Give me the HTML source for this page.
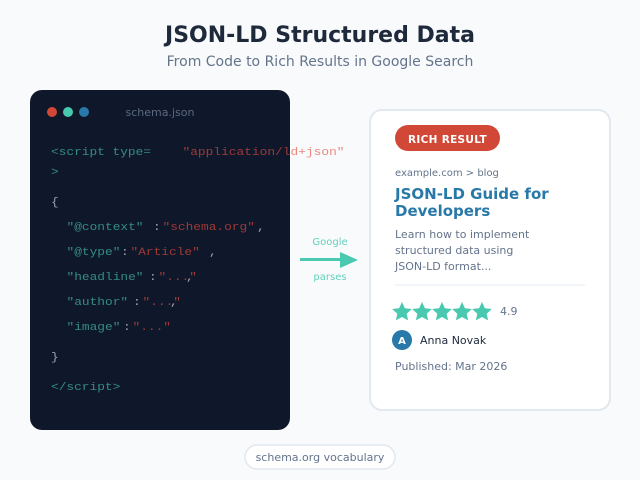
<!DOCTYPE html>
<html><head><meta charset="utf-8"><style>
html,body{margin:0;padding:0;background:#f8fafc}
svg{display:block}
text{font-family:"DejaVu Sans",sans-serif}
.c{font-family:"Liberation Mono",monospace;font-size:11px;opacity:.66}
.t{fill:#48c9b0}.r{fill:#e74c3c}.w{fill:#e2e8f0}
</style></head><body>
<svg width="640" height="480" viewBox="0 0 640 480" xmlns="http://www.w3.org/2000/svg">
<rect width="640" height="480" fill="#f8fafc"/>
<text x="320" y="42" text-anchor="middle" font-size="22" font-weight="700" fill="#1e293b">JSON-LD Structured Data</text>
<text x="320" y="66" text-anchor="middle" font-size="14" fill="#64748b">From Code to Rich Results in Google Search</text>
<rect x="30" y="90" width="260" height="340" rx="12" fill="#0f172a"/>
<circle cx="52" cy="112" r="5" fill="#d14836"/><circle cx="68" cy="112" r="5" fill="#48c9b0"/><circle cx="84" cy="112" r="5" fill="#2878a8"/>
<text x="125.500" y="116" font-size="11" fill="#64748b" opacity=".9">schema.json</text>
<text class="c t" x="51" y="155" textLength="100" lengthAdjust="spacingAndGlyphs">&lt;script type=</text>
<text class="c r" x="182.500" y="155" textLength="162" lengthAdjust="spacingAndGlyphs">"application/ld+json"</text>
<text class="c t" x="51" y="175" textLength="7.700" lengthAdjust="spacingAndGlyphs">&gt;</text>
<text class="c w" x="51" y="205" textLength="7.700" lengthAdjust="spacingAndGlyphs">{</text>
<text class="c t" x="66.500" y="230" textLength="77" lengthAdjust="spacingAndGlyphs">"@context"</text><text class="c w" x="153" y="230" textLength="7.700" lengthAdjust="spacingAndGlyphs">:</text><text class="c r" x="162.500" y="230" textLength="92.400" lengthAdjust="spacingAndGlyphs">"schema.org"</text><text class="c w" x="257" y="230" textLength="7.700" lengthAdjust="spacingAndGlyphs">,</text>
<text class="c t" x="66.500" y="255" textLength="53.900" lengthAdjust="spacingAndGlyphs">"@type"</text><text class="c w" x="121" y="255" textLength="7.700" lengthAdjust="spacingAndGlyphs">:</text><text class="c r" x="130.500" y="255" textLength="69.300" lengthAdjust="spacingAndGlyphs">"Article"</text><text class="c w" x="209" y="255" textLength="7.700" lengthAdjust="spacingAndGlyphs">,</text>
<text class="c t" x="66.500" y="280" textLength="77" lengthAdjust="spacingAndGlyphs">"headline"</text><text class="c w" x="149" y="280" textLength="7.700" lengthAdjust="spacingAndGlyphs">:</text><text class="c r" x="158.500" y="280" textLength="38.500" lengthAdjust="spacingAndGlyphs">"..."</text><text class="c w" x="186" y="280" textLength="7.700" lengthAdjust="spacingAndGlyphs">,</text>
<text class="c t" x="66.500" y="305" textLength="61.600" lengthAdjust="spacingAndGlyphs">"author"</text><text class="c w" x="133" y="305" textLength="7.700" lengthAdjust="spacingAndGlyphs">:</text><text class="c r" x="142.500" y="305" textLength="38.500" lengthAdjust="spacingAndGlyphs">"..."</text><text class="c w" x="170" y="305" textLength="7.700" lengthAdjust="spacingAndGlyphs">,</text>
<text class="c t" x="66.500" y="330" textLength="53.900" lengthAdjust="spacingAndGlyphs">"image"</text><text class="c w" x="123" y="330" textLength="7.700" lengthAdjust="spacingAndGlyphs">:</text><text class="c r" x="132.500" y="330" textLength="38.500" lengthAdjust="spacingAndGlyphs">"..."</text>
<text class="c w" x="51" y="360" textLength="7.700" lengthAdjust="spacingAndGlyphs">}</text>
<text class="c t" x="51" y="390" textLength="69.300" lengthAdjust="spacingAndGlyphs">&lt;/script&gt;</text>
<text x="330" y="245" text-anchor="middle" font-size="10" fill="#48c9b0" opacity=".85">Google</text>
<rect x="300" y="258" width="42" height="3" fill="#48c9b0"/>
<polygon points="340,252 358,260 340,268" fill="#48c9b0"/>
<text x="330" y="280" text-anchor="middle" font-size="10" fill="#48c9b0" opacity=".85">parses</text>
<rect x="370" y="110" width="240" height="300" rx="12" fill="#fff" stroke="#e2e8f0" stroke-width="2"/>
<rect x="395" y="125" width="105" height="26" rx="13" fill="#d14836"/>
<text x="447.500" y="143" text-anchor="middle" font-size="10.500" font-weight="700" letter-spacing=".3" fill="#fff">RICH RESULT</text>
<text x="395" y="176" font-size="10" fill="#64748b">example.com &gt; blog</text>
<text x="395" y="199" font-size="15" font-weight="700" fill="#2878a8">JSON-LD Guide for</text>
<text x="395" y="216" font-size="15" font-weight="700" fill="#2878a8">Developers</text>
<text x="395" y="238" font-size="11" fill="#64748b">Learn how to implement</text>
<text x="395" y="254" font-size="11" fill="#64748b">structured data using</text>
<text x="395" y="270" font-size="11" fill="#64748b">JSON-LD format...</text>
<rect x="395" y="284" width="190" height="2" fill="#f1f5f9"/>
<g fill="#48c9b0">
<polygon points="402,302 404.900,308.200 411.800,309 406.700,313.700 408.100,320.400 402,317 395.900,320.400 397.300,313.700 392.200,309 399.100,308.200"/>
<polygon transform="translate(20 0)" points="402,302 404.900,308.200 411.800,309 406.700,313.700 408.100,320.400 402,317 395.900,320.400 397.300,313.700 392.200,309 399.100,308.200"/>
<polygon transform="translate(40 0)" points="402,302 404.900,308.200 411.800,309 406.700,313.700 408.100,320.400 402,317 395.900,320.400 397.300,313.700 392.200,309 399.100,308.200"/>
<polygon transform="translate(60 0)" points="402,302 404.900,308.200 411.800,309 406.700,313.700 408.100,320.400 402,317 395.900,320.400 397.300,313.700 392.200,309 399.100,308.200"/>
<polygon transform="translate(80 0)" points="402,302 404.900,308.200 411.800,309 406.700,313.700 408.100,320.400 402,317 395.900,320.400 397.300,313.700 392.200,309 399.100,308.200"/>
</g>
<text x="500" y="315" font-size="11" fill="#64748b">4.9</text>
<circle cx="402" cy="340" r="10" fill="#2878a8"/>
<text x="402" y="344" text-anchor="middle" font-size="10" font-weight="700" fill="#fff">A</text>
<text x="420" y="344" font-size="11" fill="#1e293b">Anna Novak</text>
<text x="395" y="370" font-size="11" fill="#64748b">Published: Mar 2026</text>
<rect x="245" y="445" width="150" height="24" rx="12" fill="#fff" stroke="#e2e8f0" stroke-width="1.500"/>
<text x="320" y="461" text-anchor="middle" font-size="11" fill="#64748b">schema.org vocabulary</text>
</svg>
</body></html>
